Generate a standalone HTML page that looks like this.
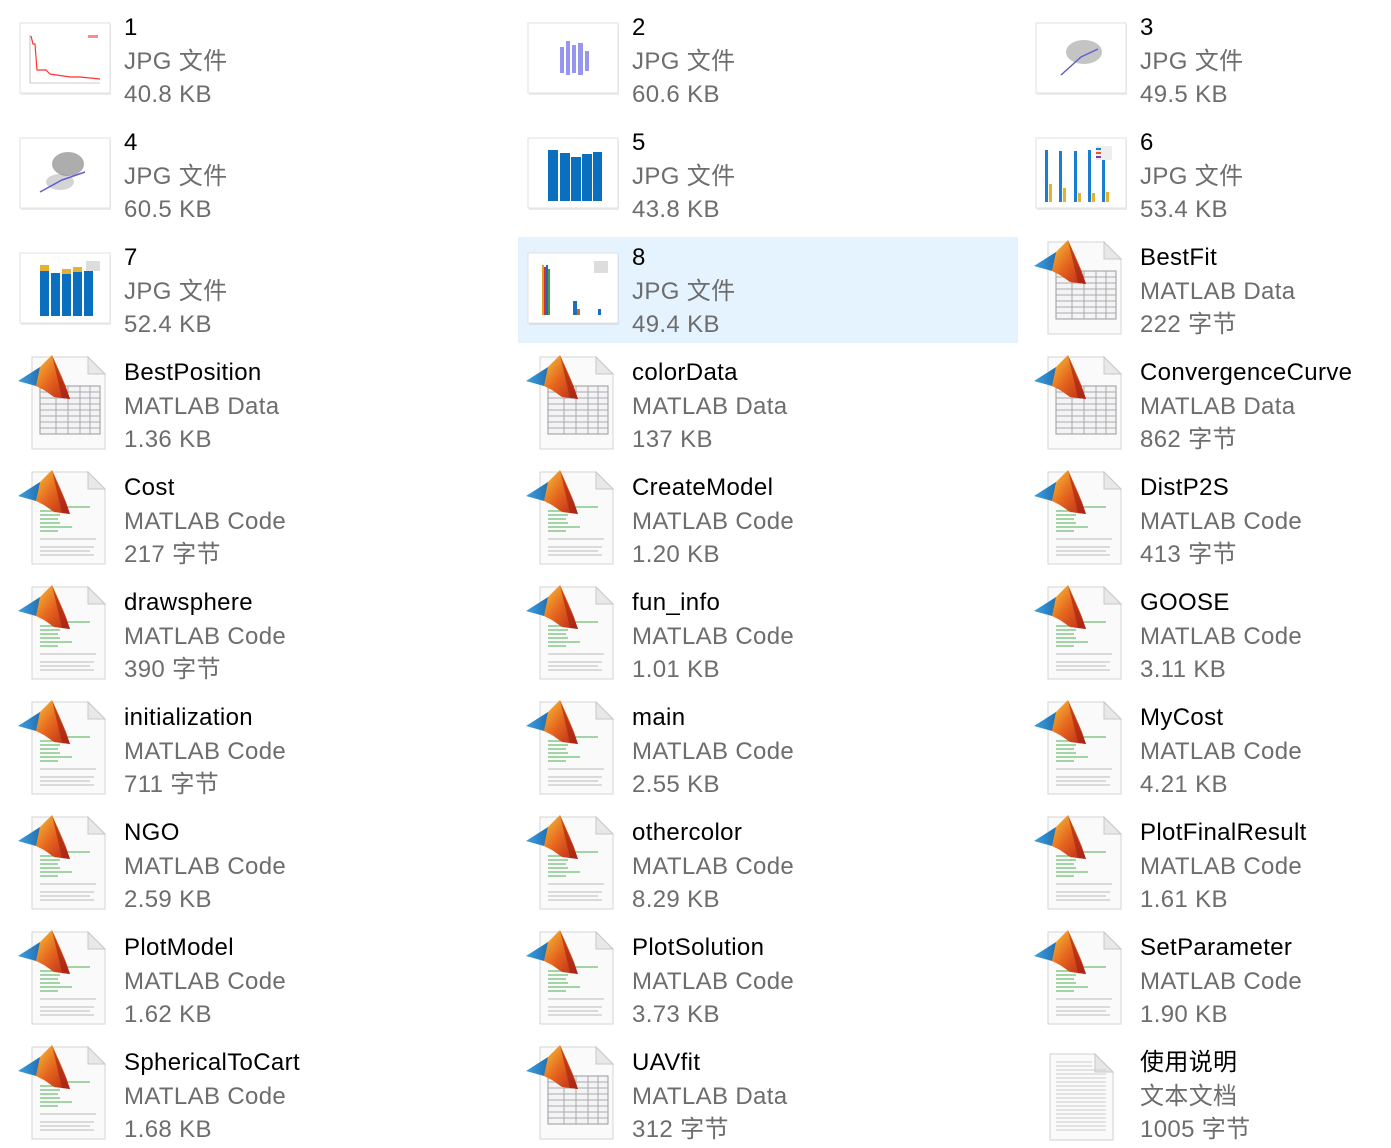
<!DOCTYPE html>
<html><head><meta charset="utf-8">
<style>
*{margin:0;padding:0;box-sizing:border-box}
body{width:1391px;height:1144px;background:#fff;position:relative;overflow:hidden;font-family:"Liberation Sans","Noto Sans CJK SC",sans-serif}
.it{position:absolute;width:500px;height:106px}
.sel{background:#e5f3ff}
.ic{position:absolute;left:0;top:0;width:110px;height:106px}
.tx{position:absolute;left:114px;top:4px;font-size:24px;line-height:33.5px;white-space:nowrap;letter-spacing:0.35px}
.tx div:first-child{color:#000}
.tx div{color:#6d6d6d}
</style></head><body>
<svg width="0" height="0" style="position:absolute">
<defs>
<linearGradient id="pk" x1="0" y1="0" x2="1" y2="1"><stop offset="0" stop-color="#f7c43a"/><stop offset=".5" stop-color="#e5641e"/><stop offset="1" stop-color="#b8261a"/></linearGradient>
<linearGradient id="bw" x1="0" y1="0" x2="1" y2="0"><stop offset="0" stop-color="#3aa0e0"/><stop offset="1" stop-color="#1c5fa0"/></linearGradient>
<symbol id="logo" viewBox="0 0 110 106">
<path d="M8 29 L30 15 L38 22 L26 34 Z" fill="url(#bw)"/>
<path d="M30 15 L42 3 Q50 20 56 35 L60 47 L44 45 L34 38 L26 34 Z" fill="url(#pk)"/>
<path d="M42 3 L60 47 L52 46 Z" fill="#a02010" opacity=".6"/>
</symbol>
<symbol id="page" viewBox="0 0 110 106">
<path d="M22 5 H78 L95 22 V97 H22 Z" fill="#fafafa" stroke="#d4d4d4"/>
<path d="M78 5 V22 H95 Z" fill="#e8e8e8" stroke="#c8c8c8"/>
</symbol>
<symbol id="code" viewBox="0 0 110 106">
<use href="#page"/>
<g stroke="#4caf50" stroke-width="1"><path d="M38 40H80M30 44H45M30 48H50M30 52H48M30 56H50M30 60H62M30 64H48"/></g>
<g stroke="#bbb" stroke-width="1"><path d="M30 72H86M30 80H84M30 84H80M30 88H84"/></g>
<use href="#logo"/>
</symbol>
<symbol id="data" viewBox="0 0 110 106">
<use href="#page"/>
<rect x="30" y="34" width="60" height="48" fill="#f4f4f6" stroke="#999"/>
<g stroke="#aaa"><path d="M30 40H90M30 46H90M30 52H90M30 58H90M30 64H90M30 70H90M30 76H90M46 34V82M58 34V82M70 34V82M80 34V82"/></g>
<use href="#logo"/>
</symbol>
<symbol id="thumb" viewBox="0 0 110 106">
<rect x="11" y="18" width="90" height="70" fill="#000" opacity=".08"/>
<rect x="10" y="16" width="90" height="70" fill="#fff" stroke="#e0e0e0"/>
</symbol>
</defs></svg>

<div class="it" style="left:10px;top:7px"><svg class="ic"><use href="#thumb"/><path d="M20 28V76H90" stroke="#999" fill="none" stroke-width=".6"/><path d="M21 29L23 37L25 37L27 63L36 63L40 67L60 70L70 70L90 72" stroke="#f33" fill="none" stroke-width="1.2"/><rect x="78" y="28" width="10" height="3" fill="#f88"/></svg><div class="tx"><div>1</div><div>JPG 文件</div><div>40.8 KB</div></div></div>
<div class="it" style="left:518px;top:7px"><svg class="ic"><use href="#thumb"/><g fill="#6a6ae8" opacity=".7"><rect x="42" y="40" width="4" height="26"/><rect x="48" y="34" width="4" height="34"/><rect x="54" y="38" width="4" height="28"/><rect x="60" y="36" width="5" height="32"/><rect x="67" y="44" width="4" height="20"/></g></svg><div class="tx"><div>2</div><div>JPG 文件</div><div>60.6 KB</div></div></div>
<div class="it" style="left:1026px;top:7px"><svg class="ic"><use href="#thumb"/><ellipse cx="58" cy="45" rx="18" ry="12" fill="#555" opacity=".35"/><path d="M35 68L55 50L72 42" stroke="#6060d0" fill="none" stroke-width="1.5"/></svg><div class="tx"><div>3</div><div>JPG 文件</div><div>49.5 KB</div></div></div>
<div class="it" style="left:10px;top:122px"><svg class="ic"><use href="#thumb"/><ellipse cx="58" cy="42" rx="16" ry="12" fill="#333" opacity=".4"/><ellipse cx="50" cy="60" rx="14" ry="8" fill="#555" opacity=".25"/><path d="M30 70L52 58L75 50" stroke="#6060d0" fill="none" stroke-width="1.5"/></svg><div class="tx"><div>4</div><div>JPG 文件</div><div>60.5 KB</div></div></div>
<div class="it" style="left:518px;top:122px"><svg class="ic"><use href="#thumb"/><g fill="#0a6fbf"><rect x="30" y="28" width="10" height="51"/><rect x="42" y="31" width="10" height="48"/><rect x="53" y="35" width="10" height="44"/><rect x="64" y="32" width="10" height="47"/><rect x="75" y="30" width="9" height="49"/></g></svg><div class="tx"><div>5</div><div>JPG 文件</div><div>43.8 KB</div></div></div>
<div class="it" style="left:1026px;top:122px"><svg class="ic"><use href="#thumb"/><g fill="#1a7fd0"><rect x="19" y="28" width="3" height="52"/><rect x="33" y="29" width="3" height="51"/><rect x="48" y="29" width="3" height="51"/><rect x="62" y="28" width="3" height="52"/><rect x="76" y="29" width="3" height="51"/></g><g fill="#e8b030"><rect x="23" y="62" width="3" height="18"/><rect x="37" y="66" width="3" height="14"/><rect x="52" y="71" width="3" height="9"/><rect x="66" y="71" width="3" height="9"/><rect x="80" y="70" width="3" height="10"/></g><rect x="70" y="24" width="16" height="14" fill="#eee"/><rect x="70" y="26" width="5" height="2" fill="#1a7fd0"/><rect x="70" y="30" width="5" height="2" fill="#e06020"/><rect x="70" y="34" width="5" height="2" fill="#8040a0"/></svg><div class="tx"><div>6</div><div>JPG 文件</div><div>53.4 KB</div></div></div>
<div class="it" style="left:10px;top:237px"><svg class="ic"><use href="#thumb"/><g fill="#0a6fbf"><rect x="30" y="34" width="9" height="45"/><rect x="41" y="36" width="9" height="43"/><rect x="52" y="37" width="9" height="42"/><rect x="63" y="35" width="9" height="44"/><rect x="74" y="34" width="9" height="45"/></g><g fill="#e8b030"><rect x="30" y="28" width="9" height="6"/><rect x="52" y="32" width="9" height="5"/><rect x="63" y="30" width="9" height="5"/></g><rect x="76" y="24" width="14" height="10" fill="#ddd"/></svg><div class="tx"><div>7</div><div>JPG 文件</div><div>52.4 KB</div></div></div>
<div class="it sel" style="left:518px;top:237px"><svg class="ic"><use href="#thumb"/><g><rect x="24" y="28" width="2" height="50" fill="#e0a020"/><rect x="26" y="30" width="2" height="48" fill="#d03030"/><rect x="28" y="28" width="2" height="50" fill="#3060c0"/><rect x="30" y="32" width="2" height="46" fill="#40a040"/><rect x="55" y="64" width="4" height="14" fill="#1a6fc0"/><rect x="59" y="72" width="3" height="6" fill="#e06020"/><rect x="80" y="72" width="3" height="6" fill="#1a6fc0"/></g><rect x="76" y="24" width="14" height="12" fill="#ddd"/></svg><div class="tx"><div>8</div><div>JPG 文件</div><div>49.4 KB</div></div></div>
<div class="it" style="left:1026px;top:237px"><svg class="ic"><use href="#data"/></svg><div class="tx"><div>BestFit</div><div>MATLAB Data</div><div>222 字节</div></div></div>
<div class="it" style="left:10px;top:352px"><svg class="ic"><use href="#data"/></svg><div class="tx"><div>BestPosition</div><div>MATLAB Data</div><div>1.36 KB</div></div></div>
<div class="it" style="left:518px;top:352px"><svg class="ic"><use href="#data"/></svg><div class="tx"><div>colorData</div><div>MATLAB Data</div><div>137 KB</div></div></div>
<div class="it" style="left:1026px;top:352px"><svg class="ic"><use href="#data"/></svg><div class="tx"><div>ConvergenceCurve</div><div>MATLAB Data</div><div>862 字节</div></div></div>
<div class="it" style="left:10px;top:467px"><svg class="ic"><use href="#code"/></svg><div class="tx"><div>Cost</div><div>MATLAB Code</div><div>217 字节</div></div></div>
<div class="it" style="left:518px;top:467px"><svg class="ic"><use href="#code"/></svg><div class="tx"><div>CreateModel</div><div>MATLAB Code</div><div>1.20 KB</div></div></div>
<div class="it" style="left:1026px;top:467px"><svg class="ic"><use href="#code"/></svg><div class="tx"><div>DistP2S</div><div>MATLAB Code</div><div>413 字节</div></div></div>
<div class="it" style="left:10px;top:582px"><svg class="ic"><use href="#code"/></svg><div class="tx"><div>drawsphere</div><div>MATLAB Code</div><div>390 字节</div></div></div>
<div class="it" style="left:518px;top:582px"><svg class="ic"><use href="#code"/></svg><div class="tx"><div>fun_info</div><div>MATLAB Code</div><div>1.01 KB</div></div></div>
<div class="it" style="left:1026px;top:582px"><svg class="ic"><use href="#code"/></svg><div class="tx"><div>GOOSE</div><div>MATLAB Code</div><div>3.11 KB</div></div></div>
<div class="it" style="left:10px;top:697px"><svg class="ic"><use href="#code"/></svg><div class="tx"><div>initialization</div><div>MATLAB Code</div><div>711 字节</div></div></div>
<div class="it" style="left:518px;top:697px"><svg class="ic"><use href="#code"/></svg><div class="tx"><div>main</div><div>MATLAB Code</div><div>2.55 KB</div></div></div>
<div class="it" style="left:1026px;top:697px"><svg class="ic"><use href="#code"/></svg><div class="tx"><div>MyCost</div><div>MATLAB Code</div><div>4.21 KB</div></div></div>
<div class="it" style="left:10px;top:812px"><svg class="ic"><use href="#code"/></svg><div class="tx"><div>NGO</div><div>MATLAB Code</div><div>2.59 KB</div></div></div>
<div class="it" style="left:518px;top:812px"><svg class="ic"><use href="#code"/></svg><div class="tx"><div>othercolor</div><div>MATLAB Code</div><div>8.29 KB</div></div></div>
<div class="it" style="left:1026px;top:812px"><svg class="ic"><use href="#code"/></svg><div class="tx"><div>PlotFinalResult</div><div>MATLAB Code</div><div>1.61 KB</div></div></div>
<div class="it" style="left:10px;top:927px"><svg class="ic"><use href="#code"/></svg><div class="tx"><div>PlotModel</div><div>MATLAB Code</div><div>1.62 KB</div></div></div>
<div class="it" style="left:518px;top:927px"><svg class="ic"><use href="#code"/></svg><div class="tx"><div>PlotSolution</div><div>MATLAB Code</div><div>3.73 KB</div></div></div>
<div class="it" style="left:1026px;top:927px"><svg class="ic"><use href="#code"/></svg><div class="tx"><div>SetParameter</div><div>MATLAB Code</div><div>1.90 KB</div></div></div>
<div class="it" style="left:10px;top:1042px"><svg class="ic"><use href="#code"/></svg><div class="tx"><div>SphericalToCart</div><div>MATLAB Code</div><div>1.68 KB</div></div></div>
<div class="it" style="left:518px;top:1042px"><svg class="ic"><use href="#data"/></svg><div class="tx"><div>UAVfit</div><div>MATLAB Data</div><div>312 字节</div></div></div>
<div class="it" style="left:1026px;top:1042px"><svg class="ic"><path d="M24 12H69L87 30V98H24Z" fill="#fafafa" stroke="#d0d0d0"/><path d="M69 12V30H87Z" fill="#e6e6e6" stroke="#c8c8c8"/><g stroke="#ccc"><path d="M30 20H66M30 24H66M30 28H80M30 32H80M30 36H80M30 40H80M30 44H80M30 48H80M30 52H80M30 56H80M30 60H80M30 64H80M30 68H80M30 72H80M30 76H80M30 80H80M30 84H80M30 88H80"/></g></svg><div class="tx"><div>使用说明</div><div>文本文档</div><div>1005 字节</div></div></div>
</body></html>
